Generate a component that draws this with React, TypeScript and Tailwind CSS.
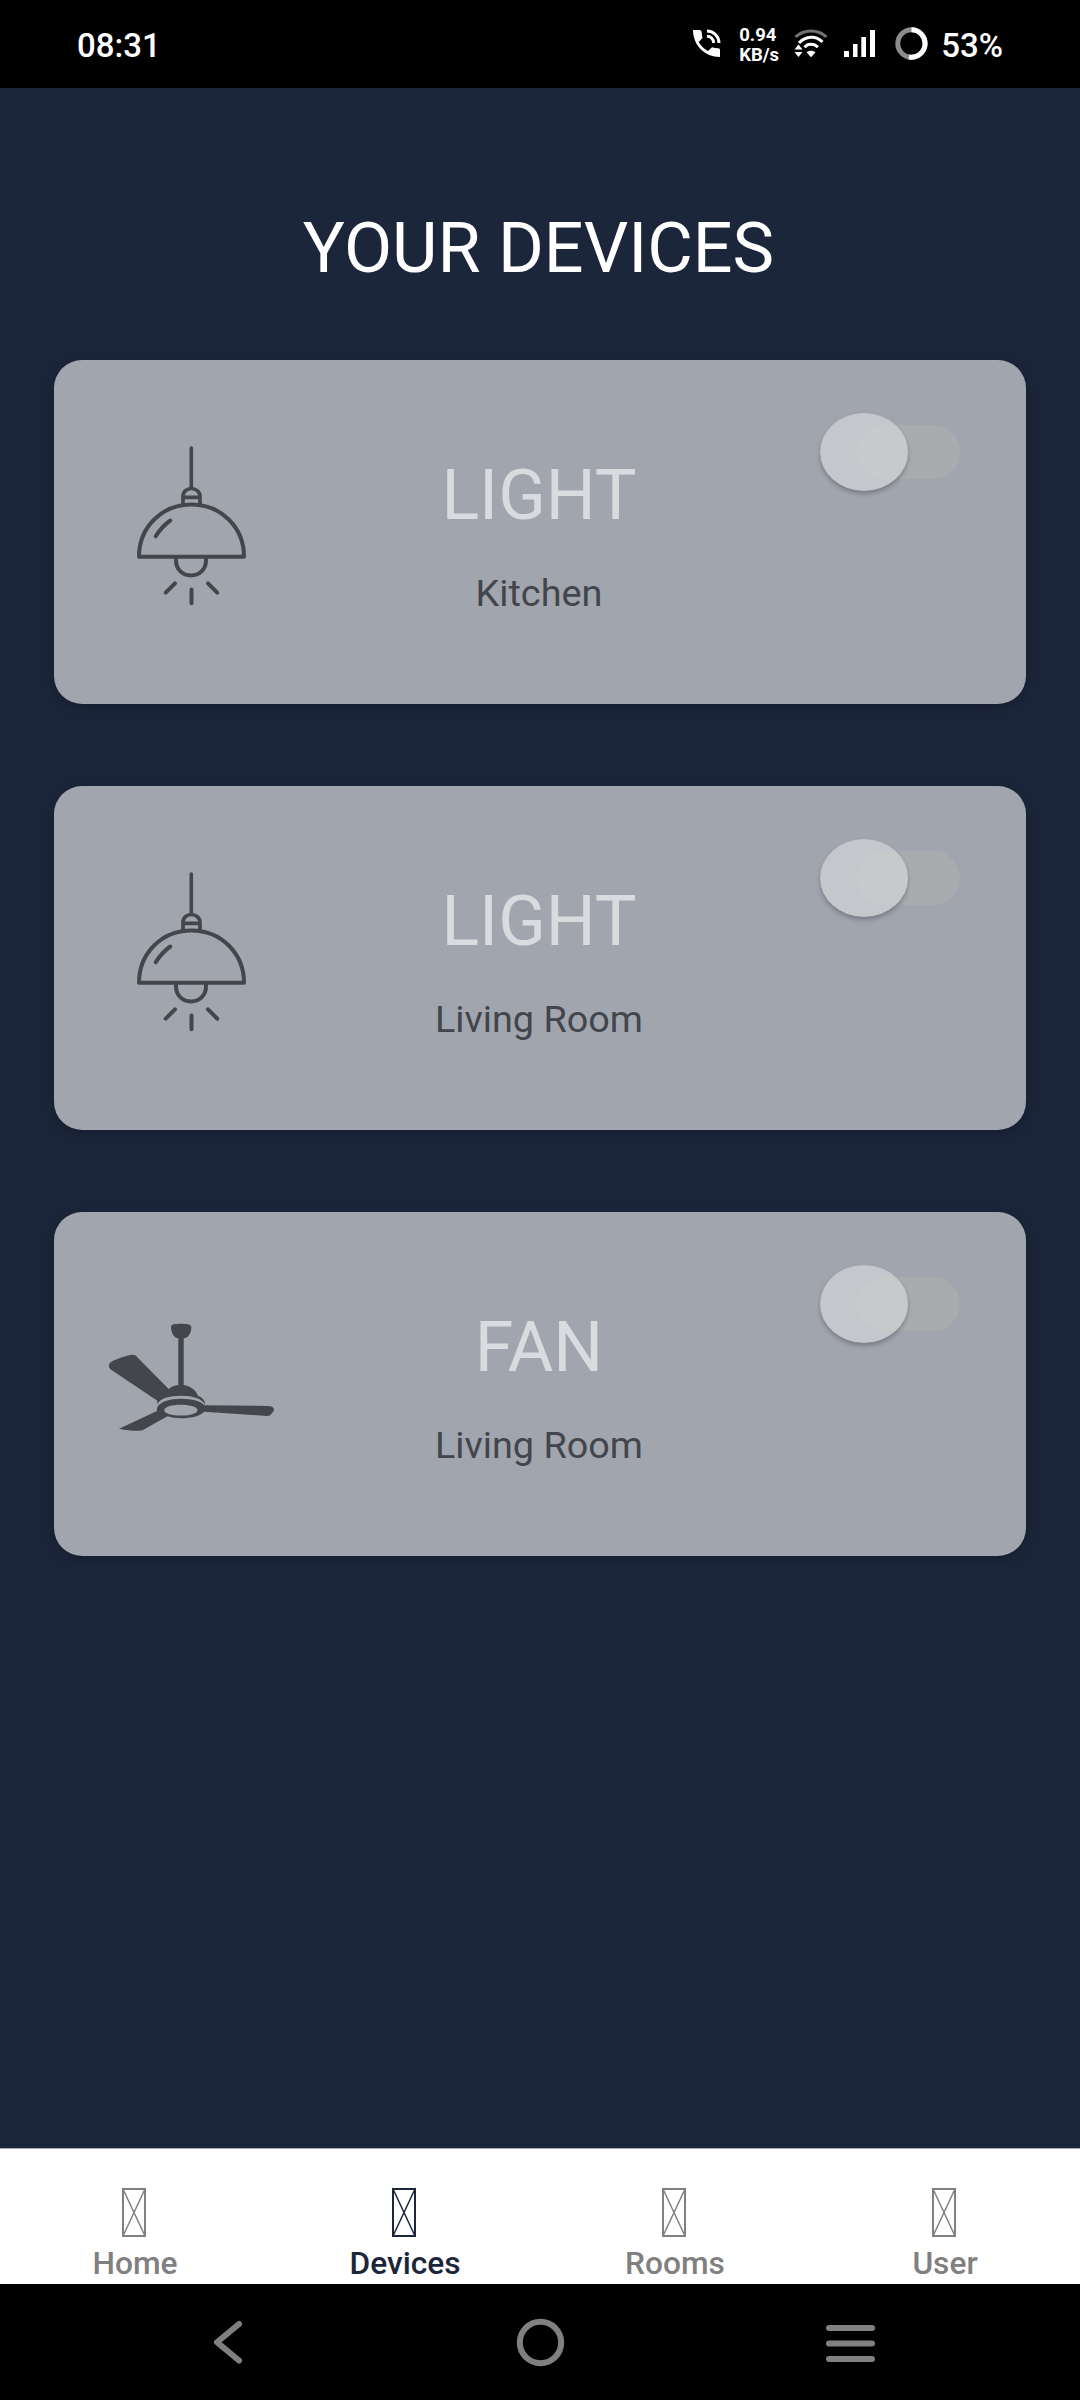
import React from "react";

function LampIcon() {
  return (
    <svg width="130" height="180" viewBox="126 436 130 180" fill="none" stroke="#43464a" strokeWidth="4" strokeLinecap="round" strokeLinejoin="round">
      <path d="M191.3 448V487" strokeWidth="3.6" />
      <path d="M183 504V496.500C183 491.500 187 488.500 191.300 488.500S200 491.500 200 496.500V504M183 497.300H200" strokeWidth="3.700" />
      <path d="M139 556.800C139 527 162 504.500 191.400 504.500S244 527 244 556.800Z" />
      <path d="M155.700 536.300C159.500 530 164 525 170.300 520.500" />
      <path d="M176 558V560.500C176 569.500 182.800 575.400 191 575.400S206 569.500 206 560.500V558" />
      <path d="M175 583.300L165.700 592.700M208 583.300L217.200 592.700M191.500 589.600V603.300" />
    </svg>
  );
}

function FanIcon() {
  return (
    <svg width="174" height="116" viewBox="104 1320 174 116" fill="#43464a">
      <path d="M171 1326.500C171 1324.300 175 1323.700 181 1323.700S191.300 1324.300 191.300 1327.200C191.300 1333 188.500 1338 183.700 1338.300V1385C190 1385.700 196 1390 198 1396C202.500 1397.500 205 1400 205 1404.700C202 1398.500 193 1395.800 181 1395.800S160 1398.500 157.300 1404.500V1400.700L111.500 1370C108 1367.500 108 1363.500 112 1361.500C118 1358.500 126 1355.500 132 1354.800C134.500 1354.500 136 1355.300 137.500 1357.500L168.700 1389C171 1386.800 174.500 1385.500 178.300 1385V1338.300C173.500 1338 171 1332.500 171 1326.500Z" />
      <path fillRule="evenodd" d="M181 1398.700C192 1398.700 201.500 1401.500 204.500 1405.200L268 1406C273 1406.200 275 1408.500 273.500 1411.300L270 1415.400L267 1416L204.300 1411.700C201 1415.500 192 1418.200 181 1418.200C176 1418.200 171.500 1417.500 167.500 1416.300L142.500 1430.300C139.500 1431.200 129 1431 119 1428.700L157 1411C155.500 1404 166 1398.700 181 1398.700ZM181 1404.800C171.500 1404.800 164.300 1407 164.300 1410.200S171.500 1415.600 181 1415.600S197.500 1413.300 197.500 1410.200S190.500 1404.800 181 1404.800Z" />
    </svg>
  );
}

function Toggle() {
  return (
    <button role="switch" aria-checked="false" aria-label="Power" className="mt-[53px] flex h-[78px] w-[140px] items-center pl-[37px]">
      <span className="relative block h-[54px] w-[103px] rounded-full bg-[#a9abae]">
        <span className="absolute -top-[12px] -left-[37px] h-[78px] w-[88px] overflow-hidden rounded-[50%] bg-[#c5c7cc]">
          <span className="absolute top-[12px] left-[37px] h-[54px] w-[103px] rounded-full bg-[#c8c9cb]" />
        </span>
        <span className="absolute -top-[12px] -left-[37px] h-[78px] w-[88px] rounded-[50%] shadow-[0_3px_4px_rgba(60,65,75,0.4)]" />
      </span>
    </button>
  );
}

function DeviceCard({ name, room, fan = false }: { name: string; room: string; fan?: boolean }) {
  return (
    <section className="grid h-[344px] grid-cols-[270px_1fr_206px] rounded-[28px] bg-[#a1a5ae] shadow-[0_3px_12px_rgba(15,22,38,0.5)]">
      <div className={fan ? "pt-[108px] pl-[50px]" : "pt-[76px] pl-[72px]"}>{fan ? <FanIcon /> : <LampIcon />}</div>
      <div className="mr-[66px] flex flex-col items-center pt-[94px]">
        <h2 className="text-[70px] leading-[82px] text-[#d9dbdf]">{name}</h2>
        <p className="mt-[34px] text-[37.800px] leading-[46px] text-[#42454b]">{room}</p>
      </div>
      <Toggle />
    </section>
  );
}

function Tab({ label, active = false }: { label: string; active?: boolean }) {
  return (
    <div className={active ? "flex flex-col items-center pt-[39px] text-[#1c263a]" : "flex flex-col items-center pt-[39px] text-[#808080]"}>
      <svg className="-ml-[2px]" width="24" height="49" viewBox="0 0 24 49" fill="none" stroke="currentColor" strokeWidth="2">
        <rect x="1" y="1" width="22" height="47" />
        <path d="M1 1L23 48M23 1L1 48" strokeWidth="1.500" />
      </svg>
      <span className="mt-[7px] text-[31.700px] leading-[40px] font-medium">{label}</span>
    </div>
  );
}

function StatusBar() {
  return (
    <header className="flex h-[88px] items-start justify-between bg-black pr-[77px] pl-[77px] text-white">
      <span className="pt-[26px] text-[33px] leading-[40px] font-medium">08:31</span>
      <div className="flex">
        <svg className="mt-[29px]" width="29" height="29" viewBox="0 0 29 29" fill="none">
          <path d="M1 1H8C9 1 9.500 2 9.600 3C9.800 5 10.100 7 10.600 9L6.700 13C9 17 12 20 16 22L20 18.200C22 18.800 24 19 26.200 19.200C27.500 19.300 28 20 28 21V28C12.500 28 1 16 1 1Z" fill="white" />
          <path d="M15 2C21.500 2 27 7.500 27 14M15 7.300C18.800 7.300 21.700 10.200 21.700 14" stroke="white" strokeWidth="3" />
        </svg>
        <div className="ml-[18px] w-[42px] pt-[25px] text-[18.500px] leading-[20px] font-bold">
          <div>0.94</div>
          <div>KB/s</div>
        </div>
        <svg className="mt-[29px] ml-[13px]" width="34" height="30" viewBox="0 0 34 30" fill="none" stroke="white" strokeWidth="3">
          <path d="M1.500 8C10 0 24 0 32.500 8" stroke="#737373" />
          <path d="M5 14C12 6.500 22 6.500 28.500 13M10.500 18.200C14 14.300 20 14.300 23.800 18.200" />
          <path d="M12.500 23.200C15 21.200 19 21.200 21.500 23.200L17 28.300ZM0.500 20.500L4.500 15.500L8.500 20.500ZM0.500 23L4.500 28L8.500 23Z" fill="white" stroke="none" />
        </svg>
        <svg className="mt-[29px] ml-[16px]" width="32" height="28" viewBox="0 0 32 28" fill="white">
          <path d="M0 22H5V28H0ZM9 15H13.500V28H9ZM17.300 8H22V28H17.300ZM26 1H31V28H26Z" />
        </svg>
        <svg className="mt-[27px] ml-[19px]" width="33" height="33" viewBox="0 0 33 33" fill="none" strokeWidth="5">
          <circle cx="16.500" cy="16.500" r="13.700" stroke="#8b8b8b" />
          <path d="M16.500 2.800A13.700 13.700 0 1 1 14 30" stroke="white" />
        </svg>
        <span className="ml-[13px] pt-[26px] text-[33px] leading-[40px] font-medium">53%</span>
      </div>
    </header>
  );
}

export default function App() {
  return (
    <div className="flex h-[2400px] w-[1080px] flex-col overflow-hidden bg-[#1c263a] font-['Roboto',sans-serif]">
      <StatusBar />
      <main className="flex-1 px-[54px] pt-[119px]">
        <h1 className="pr-[3px] text-center text-[70px] leading-[82px] text-white">YOUR DEVICES</h1>
        <div className="mt-[71px] flex flex-col gap-[82px]">
          <DeviceCard name="LIGHT" room="Kitchen" />
          <DeviceCard name="LIGHT" room="Living Room" />
          <DeviceCard name="FAN" room="Living Room" fan />
        </div>
      </main>
      <nav className="grid h-[136px] grid-cols-4 border-t border-[#a4a8b0] bg-white">
        <Tab label="Home" />
        <Tab label="Devices" active />
        <Tab label="Rooms" />
        <Tab label="User" />
      </nav>
      <footer className="flex h-[116px] bg-black pl-[213px]">
        <svg className="mt-[36px]" width="30" height="45" viewBox="0 0 30 45" fill="none" stroke="#808080" strokeWidth="6" strokeLinecap="round" strokeLinejoin="round">
          <path d="M26 4L4 22.300L26 40.500" />
        </svg>
        <svg className="mt-[34px] ml-[273px]" width="49" height="49" viewBox="0 0 49 49" fill="none" stroke="#808080" strokeWidth="6">
          <circle cx="24.500" cy="24.500" r="20.700" />
        </svg>
        <svg className="mt-[40px] ml-[261px]" width="49" height="40" viewBox="0 0 49 40" fill="#808080">
          <rect y="1" width="49" height="6" rx="3" />
          <rect y="16.400" width="49" height="6" rx="3" />
          <rect y="32" width="49" height="6" rx="3" />
        </svg>
      </footer>
    </div>
  );
}
